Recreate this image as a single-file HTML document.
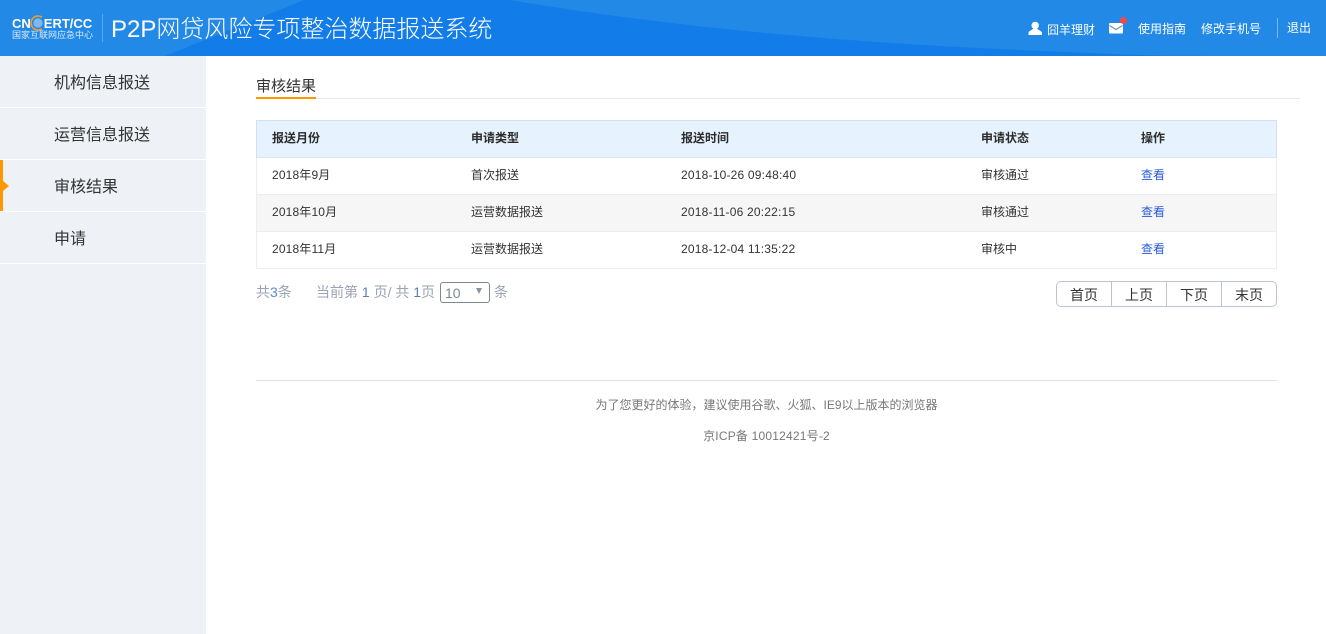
<!DOCTYPE html>
<html lang="zh-CN">
<head>
<meta charset="utf-8">
<title>P2P网贷风险专项整治数据报送系统</title>
<style>
*{box-sizing:border-box;margin:0;padding:0}
html,body{width:1326px;height:634px;overflow:hidden;background:#fff}
body{font-family:"Liberation Sans","Noto Sans CJK SC",sans-serif;font-size:12px;color:#333;position:relative}
.abs{position:absolute;white-space:nowrap;line-height:1}
#hd{position:absolute;left:0;top:0;width:1326px;height:56px;background:#127de9;overflow:hidden}
#hd svg.bg{position:absolute;left:0;top:0}
#hd .w{color:#fff}
#side{position:absolute;left:0;top:56px;width:206px;height:578px;background:#eef2f7}
#side .it{position:absolute;left:0;width:206px;height:52px;border-bottom:1px solid #fff}
#side .t{position:absolute;left:54px;font-size:16px;line-height:1;color:#333;white-space:nowrap}
#tb{position:absolute;left:256px;top:120px;width:1021px;height:149px;border:1px solid #ebedf0}
#tb .hd{position:absolute;left:-1px;top:-1px;width:1021px;height:38px;background:#e6f3fe;border:1px solid #cfe1f9;border-bottom-color:#dbe6f2}
#tb .r{position:absolute;left:0;width:1019px;height:37px;border-bottom:1px solid #ebedf0}
.c{position:absolute;font-size:12px;line-height:1;white-space:nowrap;color:#333}
.b{font-weight:bold;color:#2b2b2b}
.l{color:#2a5bd7}
.d{letter-spacing:.2px}
.m{letter-spacing:.15px}
#pg{position:absolute;left:1056px;top:281px;width:221px;height:26px;border:1px solid #bcc3d6;border-radius:5px;display:flex;background:#fff}
#pg div{width:55px;border-right:1px solid #bcc3d6;text-align:center;font-size:14px;line-height:26px;color:#333}
#pg div:last-child{border-right:0;flex:1}
.g{color:#9aa3b3;font-size:14px}
</style>
</head>
<body>
<div id="hd">
<svg class="bg" width="1326" height="56" viewBox="0 0 1326 56">
<path d="M0 0H304L165 56H0Z" fill="#2389e6"/>
<path d="M510 0C640 22 800 40 1000 49S1150 55 1210 56H1326V0Z" fill="#2389e6"/>
</svg>
<div class="abs w" style="left:12px;top:17px;font-size:13px;font-weight:bold">CN<span style="display:inline-block;width:13px"></span>ERT/CC</div>
<svg style="position:absolute;left:29px;top:14px" width="18" height="18" viewBox="0 0 18 18">
<circle cx="9" cy="9" r="4.6" fill="#7db9f0"/>
<path d="M13 3.2A7 7 0 1 0 13 14.8" fill="none" stroke="#f0a020" stroke-width="1.6"/>
</svg>
<div class="abs" style="left:12px;top:31px;font-size:9px;color:#d6e9fc">国家互联网应急中心</div>
<div style="position:absolute;left:102px;top:14px;width:1px;height:28px;background:#5aa6ec"></div>
<div class="abs w" style="left:111px;top:18px;font-size:24px;font-weight:300">P2P网贷风险专项整治数据报送系统</div>
<svg style="position:absolute;left:1028px;top:21px" width="15" height="15" viewBox="0 0 15 15">
<circle cx="7.2" cy="4.4" r="3.7" fill="#fff"/>
<path d="M0.5 14V12C0.5 10 4 9.2 5.4 7.5H9C10.4 9.2 14 10 14 12V14Z" fill="#fff"/>
</svg>
<div class="abs w" style="left:1047px;top:24px;font-size:12px">囧羊理财</div>
<svg style="position:absolute;left:1109px;top:17px" width="20" height="18" viewBox="0 0 20 18">
<rect x="0" y="6" width="14" height="10.5" rx="1" fill="#fff"/>
<path d="M0.5 8.5L7 12.5L13.5 8.5" fill="none" stroke="#6f93b8" stroke-width="1.2"/>
<circle cx="14.5" cy="3.5" r="3.5" fill="#f4474e"/>
</svg>
<div class="abs w" style="left:1138px;top:23px;font-size:12px">使用指南</div>
<div class="abs w" style="left:1201px;top:23px;font-size:12px">修改手机号</div>
<div style="position:absolute;left:1277px;top:18px;width:1px;height:20px;background:#79b8f0"></div>
<div class="abs w" style="left:1287px;top:22px;font-size:12px">退出</div>
</div>

<div id="side">
<div class="it" style="top:0"></div><div class="t" style="top:20px">机构信息报送</div>
<div class="it" style="top:52px"></div><div class="t" style="top:72px">运营信息报送</div>
<div class="it" style="top:104px"></div><div class="t" style="top:124px">审核结果</div>
<div class="it" style="top:156px"></div><div class="t" style="top:176px">申请</div>
<div style="position:absolute;left:0;top:104px;width:3px;height:51px;background:#ff9800"></div>
<div style="position:absolute;left:3px;top:125px;width:0;height:0;border-left:6px solid #ff9800;border-top:5px solid transparent;border-bottom:5px solid transparent"></div>
</div>

<div class="abs" style="left:256px;top:79px;font-size:15px;color:#333">审核结果</div>
<div style="position:absolute;left:256px;top:98px;width:1044px;height:1px;background:#e6e8ef"></div>
<div style="position:absolute;left:256px;top:97px;width:60px;height:2px;background:#ff9800"></div>

<div id="tb">
<div class="hd"></div>
<div class="r" style="top:37px"></div>
<div class="r" style="top:74px;background:#f6f6f6"></div>
<div class="r" style="top:111px;border-bottom:0"></div>
</div>
<div class="c b" style="left:272px;top:132px">报送月份</div>
<div class="c b" style="left:471px;top:132px">申请类型</div>
<div class="c b" style="left:681px;top:132px">报送时间</div>
<div class="c b" style="left:981px;top:132px">申请状态</div>
<div class="c b" style="left:1141px;top:132px">操作</div>

<div class="c m" style="left:272px;top:169px">2018年9月</div>
<div class="c" style="left:471px;top:169px">首次报送</div>
<div class="c d" style="left:681px;top:169px">2018-10-26 09:48:40</div>
<div class="c" style="left:981px;top:169px">审核通过</div>
<div class="c l" style="left:1141px;top:169px">查看</div>

<div class="c m" style="left:272px;top:206px">2018年10月</div>
<div class="c" style="left:471px;top:206px">运营数据报送</div>
<div class="c d" style="left:681px;top:206px">2018-11-06 20:22:15</div>
<div class="c" style="left:981px;top:206px">审核通过</div>
<div class="c l" style="left:1141px;top:206px">查看</div>

<div class="c m" style="left:272px;top:243px">2018年11月</div>
<div class="c" style="left:471px;top:243px">运营数据报送</div>
<div class="c d" style="left:681px;top:243px">2018-12-04 11:35:22</div>
<div class="c" style="left:981px;top:243px">审核中</div>
<div class="c l" style="left:1141px;top:243px">查看</div>

<div class="abs g" style="left:256px;top:285px">共<span style="color:#5b8bc9">3</span>条</div>
<div class="abs g" style="left:316px;top:285px">当前第 <span style="color:#5b7fb5">1</span> 页/ 共 <span style="color:#5b7fb5">1</span>页</div>
<div style="position:absolute;left:440px;top:282px;width:50px;height:21px;border:1px solid #7d8795;border-radius:3px;background:#fff"></div>
<div class="abs" style="left:445px;top:286px;font-size:14px;color:#7d8795">10</div>
<div style="position:absolute;left:476px;top:288px;width:0;height:0;border-top:6px solid #8a93a0;border-left:3.5px solid transparent;border-right:3.5px solid transparent"></div>
<div class="abs g" style="left:494px;top:285px">条</div>

<div id="pg"><div>首页</div><div>上页</div><div>下页</div><div>末页</div></div>

<div style="position:absolute;left:256px;top:380px;width:1021px;height:1px;background:#dde1e5"></div>
<div class="abs" style="left:256px;width:1021px;text-align:center;top:399px;font-size:12px;color:#777">为了您更好的体验，建议使用谷歌、火狐、IE9以上版本的浏览器</div>
<div class="abs d" style="left:256px;width:1021px;text-align:center;top:430px;font-size:12px;color:#777">京ICP备 10012421号-2</div>
</body>
</html>
